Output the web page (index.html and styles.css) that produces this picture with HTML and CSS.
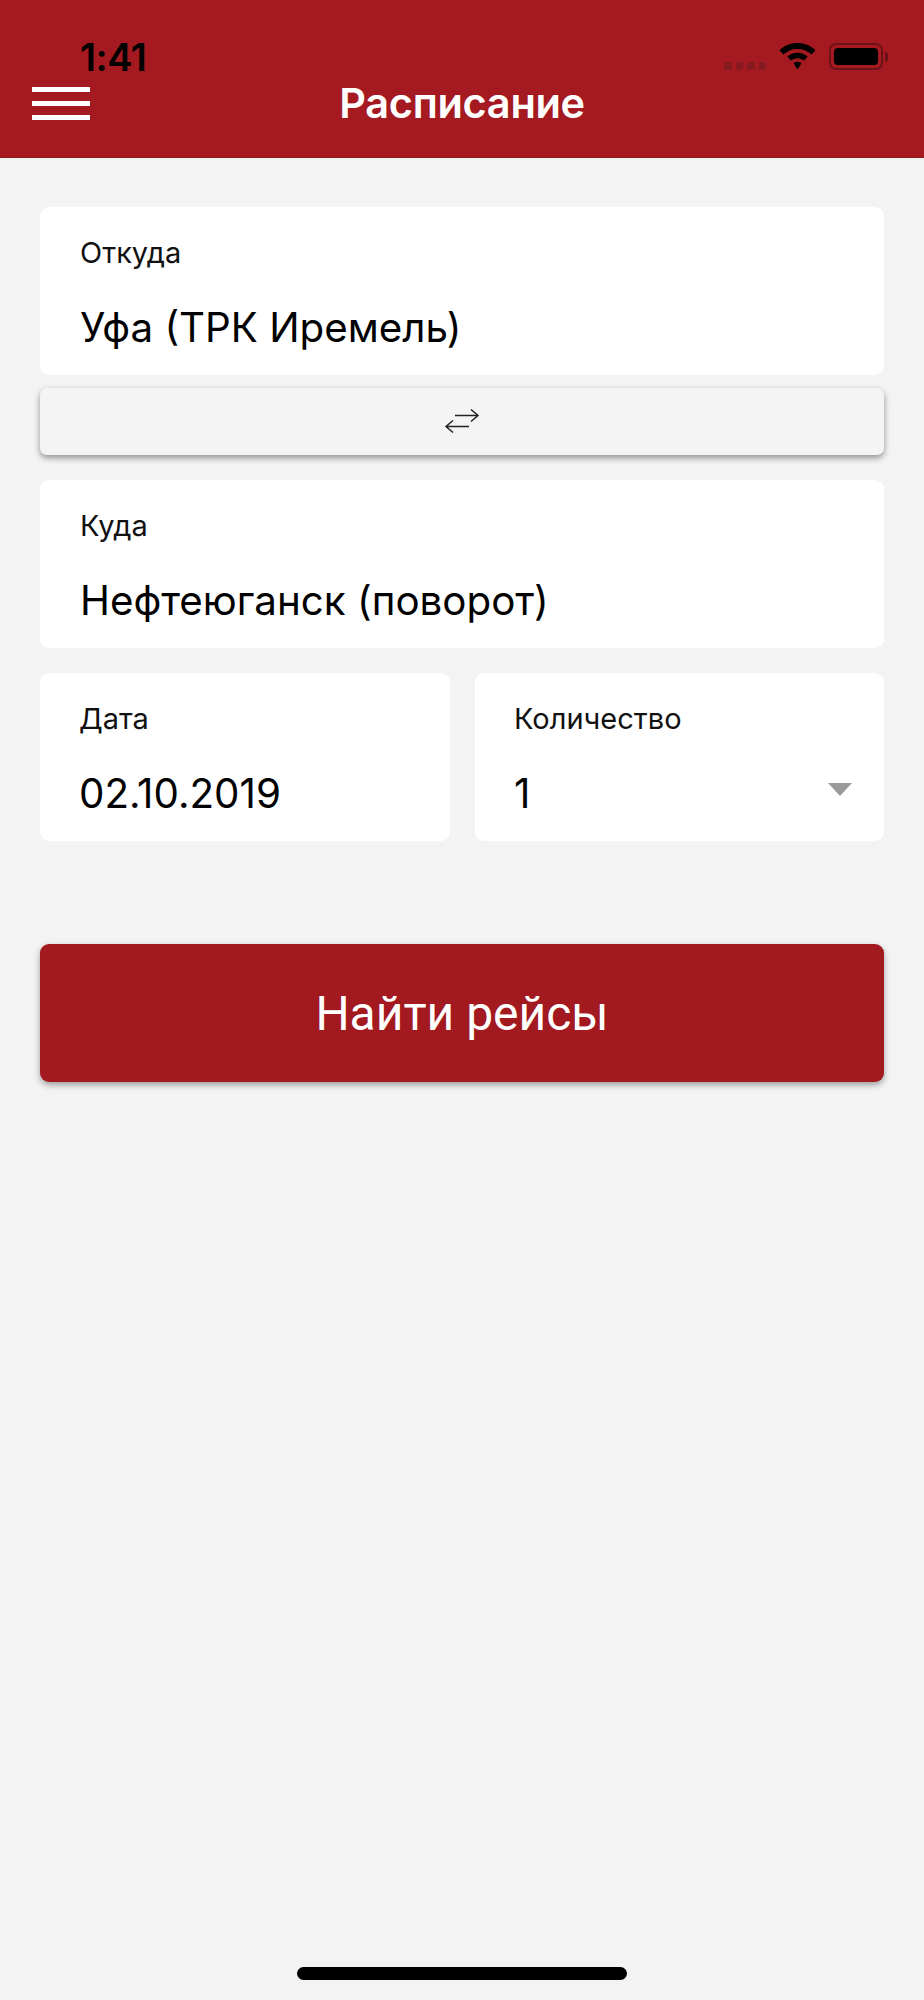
FILE: index.html
```html
<!DOCTYPE html>
<html lang="ru">
<head>
  <meta charset="UTF-8">
  <title>Расписание</title>
  <link rel="stylesheet" href="styles.css">
</head>
<body>
  <div class="status-bar">
    <span class="status-time">1:41</span>
    <div class="status-icons">
      <div class="signal"><i></i><i></i><i></i><i></i></div>
      <svg class="wifi" width="37" height="27" viewBox="0 0 38 28" preserveAspectRatio="none">
        <path d="M19 0C12 0 6 2.600 0.500 7.500L4.500 12C8.500 8.300 13.500 6.200 19 6.200C24.500 6.200 29.500 8.300 33.500 12L37.500 7.500C32 2.600 26 0 19 0Z"/>
        <path d="M19 10C15 10 11.500 11.400 8.500 14L12.300 18.200C14.200 16.600 16.500 15.700 19 15.700C21.500 15.700 23.800 16.600 25.700 18.200L29.500 14C26.500 11.400 23 10 19 10Z"/>
        <path d="M19 19.500C17.500 19.500 16.200 20 15 21L19 27.500L23 21C21.800 20 20.500 19.500 19 19.500Z"/>
      </svg>
      <div class="battery"><div class="battery-fill"></div></div>
      <div class="battery-cap"></div>
    </div>
  </div>

  <header class="app-header">
    <div class="menu-icon"><span></span><span></span><span></span></div>
    <h1>Расписание</h1>
  </header>

  <main class="form">
    <div class="field">
      <div class="field-label">Откуда</div>
      <div class="field-value">Уфа (ТРК Иремель)</div>
    </div>

    <div class="swap-btn">
      <svg width="38" height="28" viewBox="0 0 38 28" fill="none" stroke="#222" stroke-width="1.500">
        <path d="M12 7.500H35M28 1.500L35 7.500L28 13.500"/>
        <path d="M26 18.500H3M10 12.500L3 18.500L10 24.500"/>
      </svg>
    </div>

    <div class="field">
      <div class="field-label">Куда</div>
      <div class="field-value">Нефтеюганск (поворот)</div>
    </div>

    <div class="field-row">
      <div class="field">
        <div class="field-label">Дата</div>
        <div class="field-value">02.10.2019</div>
      </div>
      <div class="field">
        <div class="field-label">Количество</div>
        <div class="field-value">1</div>
        <div class="select-arrow"></div>
      </div>
    </div>

    <button class="search-btn">Найти рейсы</button>
  </main>

  <div class="home-bar"></div>
</body>
</html>
```

FILE: styles.css
```css
* {
  box-sizing: border-box;
}

body {
  margin: 0;
  min-height: 2000px;
  background-color: #f3f3f3;
  font-family: Inter, "Liberation Sans", sans-serif;
  color: #000;
  position: relative;
}

/* status bar lies over the header */
.status-bar {
  position: absolute;
  top: 0;
  left: 0;
  width: 100%;
  height: 80px;
  z-index: 2;
}

.status-time {
  position: absolute;
  left: 80px;
  top: 37px;
  font-size: 38px;
  line-height: 40px;
  font-weight: 600;
  letter-spacing: -0.5px;
}

.status-icons {
  position: absolute;
  left: 724px;
  top: 43px;
  display: flex;
  align-items: flex-start;
}

.signal {
  display: flex;
  gap: 4px;
  margin: 19px 13px 0 0;
}

.signal i {
  display: block;
  width: 7.5px;
  height: 8px;
  border-radius: 2px;
  background-color: #861a20;
}

.wifi {
  margin-right: 13px;
}

.battery {
  width: 54px;
  height: 27px;
  padding: 3px;
  border: 2px solid #6d1218;
  border-radius: 7px;
}

.battery-fill {
  height: 100%;
  background-color: #000;
  border-radius: 4px;
}

.battery-cap {
  width: 3px;
  height: 10px;
  margin: 9px 0 0 2px;
  background-color: #6d1218;
  border-radius: 0 3px 3px 0;
}

.app-header {
  height: 158px;
  padding-top: 81px;
  background-color: #a51a20;
  border-bottom: 1px solid #8c1a20;
  display: flex;
  align-items: flex-start;
  justify-content: center;
  position: relative;
}

.app-header h1 {
  margin: 0;
  font-size: 41.5px;
  line-height: 44px;
  font-weight: 600;
  letter-spacing: -0.3px;
  color: #fff;
}

.menu-icon {
  position: absolute;
  left: 32px;
  top: 87px;
  width: 58px;
  display: flex;
  flex-direction: column;
  gap: 9px;
}

.menu-icon span {
  display: block;
  height: 5px;
  background-color: #fff;
}

.form {
  padding: 49px 40px 0;
  display: flex;
  flex-direction: column;
}

.field {
  position: relative;
  height: 168px;
  padding: 30px 40px 0;
  background-color: #fff;
  border-radius: 9px;
}

.field-label {
  font-size: 29px;
  line-height: 32px;
  color: #111;
}

.field-value {
  margin-top: 35px;
  font-size: 40.300px;
  line-height: 48px;
}

.swap-btn {
  height: 67px;
  margin: 13px 0 25px;
  background-color: #f4f4f4;
  border-radius: 7px;
  box-shadow: 0 3px 6px rgba(0, 0, 0, 0.4);
  display: flex;
  align-items: center;
  justify-content: center;
}

.field-row {
  display: grid;
  grid-template-columns: 410px 409px;
  gap: 25px;
  margin-top: 25px;
}

.field-row .field {
  padding-left: 39px;
}

.select-arrow {
  position: absolute;
  right: 32px;
  top: 110px;
  width: 0;
  height: 0;
  border-left: 12px solid transparent;
  border-right: 12px solid transparent;
  border-top: 13px solid #9b9b9b;
}

.search-btn {
  height: 138px;
  margin-top: 103px;
  border: none;
  border-radius: 9px;
  background-color: #a2191f;
  color: #fff;
  font-family: Roboto, "Liberation Sans", sans-serif;
  font-size: 48px;
  box-shadow: 0 3px 6px rgba(0, 0, 0, 0.35);
}

.home-bar {
  position: absolute;
  left: 297px;
  top: 1967px;
  width: 330px;
  height: 13px;
  background-color: #000;
  border-radius: 7px;
}
```
